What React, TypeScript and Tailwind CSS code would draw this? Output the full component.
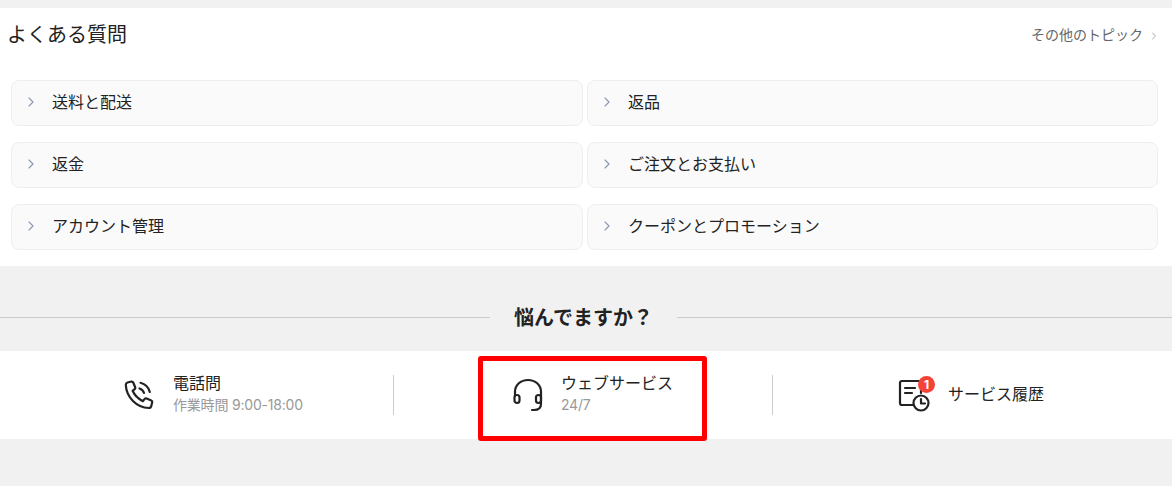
import { ChevronRight } from 'lucide-react'

const topics = [
  '送料と配送',
  '返品',
  '返金',
  'ご注文とお支払い',
  'アカウント管理',
  'クーポンとプロモーション',
]

function PhoneIcon() {
  return (
    <svg width="32" height="32" viewBox="0 0 32 32" fill="none" stroke="#222" strokeWidth="2.2" strokeLinecap="round" strokeLinejoin="round">
      <path d="M4.5 3.5 L8.5 2.5 C9.3 2.4 9.9 2.8 10.2 3.5 L12.2 8.2 C12.5 8.9 12.3 9.6 11.7 10.1 L9.6 11.8 C11.4 15.8 14.8 19.6 19.8 22.2 L21.7 19.9 C22.2 19.3 22.9 19.2 23.6 19.5 L28.3 21.6 C29 21.9 29.4 22.6 29.2 23.3 L28.3 27 C28 28.2 27 29 25.8 29 C13.6 28.6 3.4 18.2 2.8 6 C2.8 4.8 3.4 3.8 4.5 3.5 Z" />
      <path d="M16.5 9.5 C18.8 10.2 20.4 11.8 21 14" />
      <path d="M17.5 3.8 C22.2 5 25.6 8.4 26.8 13" />
    </svg>
  )
}

function HeadsetIcon() {
  return (
    <svg width="32" height="34" viewBox="0 0 32 34" fill="none" stroke="#222" strokeWidth="2.2" strokeLinecap="round" strokeLinejoin="round">
      <path d="M3 18 V14 C3 6.8 8.8 2 16 2 C23.2 2 29 6.8 29 14 V18" />
      <rect x="2.5" y="17" width="5" height="8" rx="2.5" />
      <path d="M29 18 V26 C29 30 26 32 22 32 H20" />
      <rect x="24" y="17" width="5" height="8" rx="2.5" />
    </svg>
  )
}

function HistoryIcon() {
  return (
    <svg width="34" height="34" viewBox="0 0 34 34" fill="none" stroke="#222" strokeWidth="2.2" strokeLinecap="round" strokeLinejoin="round">
      <path d="M15 27 H4 C2.9 27 2 26.1 2 25 V5 C2 3.9 2.9 3 4 3 H21 C22.1 3 23 3.9 23 5 V15" />
      <path d="M7 10 H17" />
      <path d="M7 15 H14" />
      <circle cx="23" cy="25" r="7.5" />
      <path d="M23 21 V25.5 H27" />
    </svg>
  )
}

export default function App() {
  return (
    <div
      className="relative h-[486px] w-[1172px] overflow-hidden bg-[#f1f1f1] pt-2 text-[#222]"
      style={{ fontFamily: 'Inter, "Noto Sans CJK JP", sans-serif' }}
    >
      <section className="h-[258px] bg-white">
        <div className="flex h-[54px] items-center justify-between pl-[7px] pr-[12px]">
          <h2 className="pb-[1px] text-[20px] font-normal leading-none">よくある質問</h2>
          <a className="flex items-center gap-[5px] pb-[2px] text-[14px] text-[#666]">
            その他のトピック
            <ChevronRight size={12} className="mt-[3px] text-[#aaa]" />
          </a>
        </div>
        <div className="mt-[18px] grid grid-cols-[572px_571px] gap-x-1 gap-y-4 pl-[11px]">
          {topics.map((topic) => (
            <div
              key={topic}
              className="flex h-[46px] items-center rounded-lg border border-[#eeeeee] bg-[#fafafa] pb-[2px] pl-[11px] text-[16px]"
            >
              <ChevronRight size={16} strokeWidth={1.75} className="mr-[13px] text-[#8a9bb0]" />
              {topic}
            </div>
          ))}
        </div>
      </section>

      <div className="flex h-[85px] items-center gap-[24px] pt-[34px] pb-[16px]">
        <div className="h-px flex-1 bg-[#cccccc]" />
        <h3 className="text-[20px] font-bold leading-none">悩んでますか？</h3>
        <div className="h-px w-[495px] bg-[#cccccc]" />
      </div>

      <div className="flex h-[88px] items-center bg-white">
        <div className="flex w-[393px] items-center gap-[18px] pl-[123px]">
          <PhoneIcon />
          <div className="pb-[2px]">
            <div className="text-[16px] leading-[22px]">電話問</div>
            <div className="text-[14px] leading-[22px] tracking-[-0.2px] text-[#999]">作業時間 9:00-18:00</div>
          </div>
        </div>
        <div className="h-10 w-px bg-[#cccccc]" />
        <div className="flex w-[378px] items-center gap-[17px] pl-[118px]">
          <HeadsetIcon />
          <div className="pb-[2px]">
            <div className="text-[16px] leading-[22px]">ウェブサービス</div>
            <div className="text-[14px] leading-[22px] tracking-[-0.2px] text-[#999]">24/7</div>
          </div>
        </div>
        <div className="h-10 w-px bg-[#cccccc]" />
        <div className="flex flex-1 items-center gap-[16px] pl-[125px]">
          <div className="relative">
            <HistoryIcon />
            <span className="absolute -top-[2px] right-[-3px] flex h-[17px] w-[17px] items-center justify-center rounded-full bg-[#f44336] text-[12px] font-bold leading-none text-white">
              1
            </span>
          </div>
          <div className="pb-[2px] text-[16px]">サービス履歴</div>
        </div>
      </div>

      <div className="absolute left-[478px] top-[356px] h-[85px] w-[229px] rounded-[3px] border-[5px] border-[#ff0000]" />
    </div>
  )
}
